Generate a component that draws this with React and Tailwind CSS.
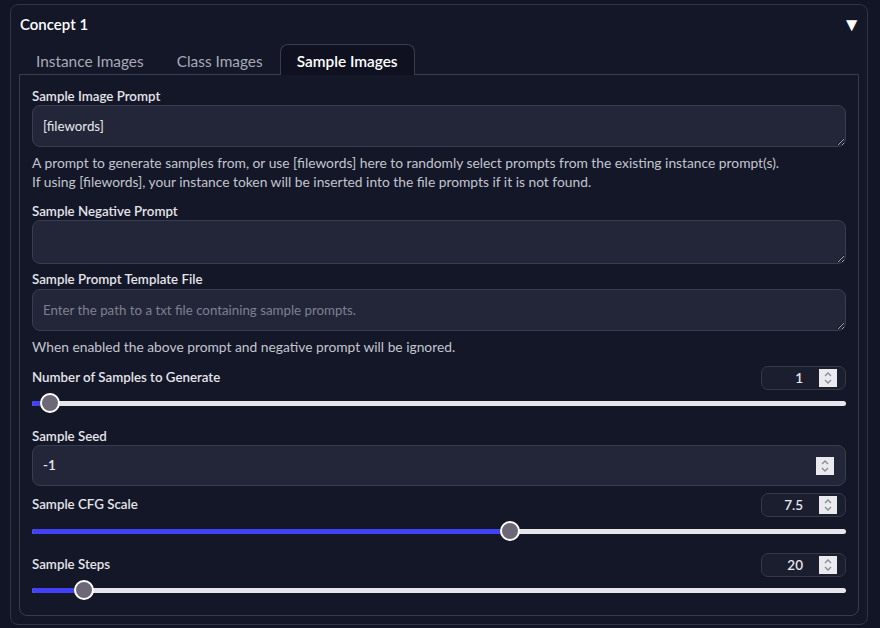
const FONT = { fontFamily: 'Lato, "Noto Sans", sans-serif' }

function Spinner() {
  return (
    <div className="flex h-[18px] w-[18px] items-center justify-center bg-[#e9e9ee]">
      <svg width="10" height="14" viewBox="0 0 10 14" fill="none" stroke="#8a8a96" strokeWidth="1.3">
        <path d="M2 5 L5 2 L8 5" />
        <path d="M2 9 L5 12 L8 9" />
      </svg>
    </div>
  )
}

function NumberBox({ value }) {
  return (
    <div className="flex h-[24px] w-[85px] items-center justify-end gap-[16px] rounded-[7px] border border-[#343849] bg-[#1b1e2f] pr-[8px]">
      <span className="text-[13.5px] font-semibold leading-[18px] text-[#e8e8ee]">{value}</span>
      <Spinner />
    </div>
  )
}

// thumb is 20px wide, so its centre runs from 10px to (100% - 10px)
function Slider({ pct, className = '' }) {
  const centre = `calc(10px + (100% - 20px) * ${pct / 100})`
  return (
    <div className={`relative h-[20px] ${className}`}>
      <div className="absolute left-0 right-0 top-[8px] h-[5px] rounded-full bg-[#e6e5ea]" />
      <div className="absolute left-0 top-[8px] h-[5px] rounded-full bg-[#4141f5]" style={{ width: centre }} />
      <div
        className="absolute top-0 h-[20px] w-[20px] -translate-x-1/2 rounded-full border-2 border-white bg-[#6c6878]"
        style={{ left: centre }}
      />
    </div>
  )
}

function Label({ children, className = '' }) {
  return <div className={`text-[13.3px] font-semibold leading-[18px] text-[#e4e4ea] ${className}`}>{children}</div>
}

function Area({ value, placeholder, h = 'h-[42px]', className = '' }) {
  return (
    <textarea
      readOnly
      defaultValue={value}
      placeholder={placeholder}
      className={`block w-full ${h} ${className} resize-y rounded-[8px] border border-[#383c50] bg-[#232638] px-[10px] py-[11px] text-[13.3px] leading-[18px] text-[#e8e8ee] outline-none placeholder:text-[#7d8090]`}
      style={FONT}
    />
  )
}

function Info({ children }) {
  return <div className="whitespace-nowrap text-[13.8px] leading-[19px] text-[#c3c5cf]">{children}</div>
}

function SliderRow({ label, value, pct, gap, sliderGap }) {
  return (
    <>
      <div className={`flex h-[24px] items-center justify-between ${gap}`}>
        <Label className="-mt-[3px]">{label}</Label>
        <NumberBox value={value} />
      </div>
      <Slider pct={pct} className={sliderGap} />
    </>
  )
}

export default function App() {
  return (
    <div className="h-[628px] w-[880px] bg-[#121526] pl-[10px] pr-[12px] pt-[4px]" style={FONT}>
      <div className="h-[621px] rounded-[8px] border border-[#303448] bg-[#141728] px-[8px] pt-[9px]">
        <div className="flex h-[20px] items-center justify-between">
          <span className="pl-[1px] text-[15px] font-semibold leading-[20px] text-white">Concept 1</span>
          <span className="-mr-[2px] text-[19px] leading-[20px] text-white">▼</span>
        </div>

        <div className="mt-[10px] flex h-[31px] items-end pl-[1px] text-[15.4px] leading-[20px]">
          <div className="px-[16px] pb-[4px] text-[#a7aab6]">Instance Images</div>
          <div className="px-[17px] pb-[4px] text-[#a7aab6]">Class Images</div>
          <div className="relative z-10 h-[31px] rounded-t-[8px] border border-b-0 border-[#383c50] bg-[#0f1120] px-[16px] pt-[6px] font-semibold text-white">
            Sample Images
          </div>
        </div>

        <div className="-mt-px h-[542px] rounded-b-[8px] border border-[#383c50] px-[12px] pt-[12px]">
          <Label>Sample Image Prompt</Label>
          <Area value="[filewords]" />
          <div className="mt-[6px]">
            <Info>A prompt to generate samples from, or use [filewords] here to randomly select prompts from the existing instance prompt(s).</Info>
            <Info>If using [filewords], your instance token will be inserted into the file prompts if it is not found.</Info>
          </div>

          <div className="mt-[11px]">
            <Label>Sample Negative Prompt</Label>
            <Area value="" h="h-[44px]" />
          </div>

          <div className="mt-[6px]">
            <Label>Sample Prompt Template File</Label>
            <Area placeholder="Enter the path to a txt file containing sample prompts." className="mt-px" />
          </div>
          <div className="mt-[6px]">
            <Info>When enabled the above prompt and negative prompt will be ignored.</Info>
          </div>

          <SliderRow label="Number of Samples to Generate" value="1" pct={1} gap="mt-[10px]" sliderGap="mt-[3px]" />

          <div className="mt-[14px]">
            <Label>Sample Seed</Label>
            <div className="flex h-[41px] items-center justify-between rounded-[8px] border border-[#383c50] bg-[#232638] pl-[10px] pr-[11px]">
              <span className="text-[13.5px] font-semibold text-[#e8e8ee]">-1</span>
              <Spinner />
            </div>
          </div>

          <SliderRow label="Sample CFG Scale" value="7.5" pct={59} gap="mt-[7px]" sliderGap="mt-[4px]" />
          <SliderRow label="Sample Steps" value="20" pct={5.3} gap="mt-[12px]" sliderGap="mt-[3px]" />
        </div>
      </div>
    </div>
  )
}
